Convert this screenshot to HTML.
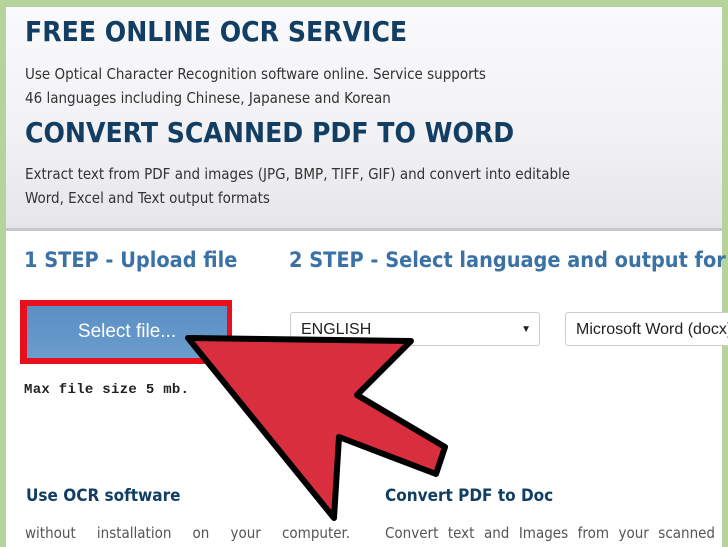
<!DOCTYPE html>
<html><head><style>
body{margin:0;width:728px;height:546px;overflow:hidden;background:#b5d39a;font-family:"DejaVu Sans Condensed","Liberation Sans",sans-serif;}
.page{position:absolute;left:6px;top:7px;width:716px;height:540px;background:#fff;}
.top{position:absolute;left:0;top:0;width:716px;height:221px;background:linear-gradient(#fafafc,#f1f1f4 60%,#e6e6ea);border-bottom:3px solid #c8c8cc;}
h1{position:absolute;margin:0;left:19px;font-size:28px;font-weight:bold;color:#123e63;font-family:"DejaVu Sans Condensed","Liberation Sans",sans-serif;white-space:nowrap}
.p{position:absolute;left:19px;font-size:15px;color:#333;line-height:24px;white-space:nowrap}
h2{position:absolute;margin:0;font-size:21.5px;font-weight:bold;color:#3b72a6;font-family:"DejaVu Sans Condensed","Liberation Sans",sans-serif;white-space:nowrap}
.sel{position:absolute;top:305px;height:34px;border:1px solid #ccc;border-radius:3px;background:#fff;font:16px "Liberation Sans",sans-serif;color:#222;line-height:34px;padding-left:10px;box-sizing:border-box;white-space:nowrap;overflow:hidden}
h3{position:absolute;margin:0;font-size:17px;font-weight:bold;color:#123e63;font-family:"DejaVu Sans Condensed","Liberation Sans",sans-serif;}
</style></head><body>
<div class="page">
<div class="top">
<h1 style="top:8px">FREE ONLINE OCR SERVICE</h1>
<div class="p" style="top:55px">Use Optical Character Recognition software online. Service supports<br>46 languages including Chinese, Japanese and Korean</div>
<h1 style="top:109px">CONVERT SCANNED PDF TO WORD</h1>
<div class="p" style="top:155px">Extract text from PDF and images (JPG, BMP, TIFF, GIF) and convert into editable<br>Word, Excel and Text output formats</div>
</div>
<h2 style="left:18px;top:241px">1 STEP - Upload file</h2>
<h2 style="left:283px;top:241px">2 STEP - Select language and output for</h2>
<div style="position:absolute;left:14px;top:293px;width:212px;height:64px;background:#e8101c"></div>
<div style="position:absolute;left:21px;top:299px;width:200px;height:52px;background:linear-gradient(#5b8fc4,#6a9ccc);color:#fff;font:19px 'Liberation Sans',sans-serif;line-height:52px;text-align:center">Select file...</div>
<div class="sel" style="left:284px;width:250px">ENGLISH<span style="position:absolute;right:8px;font-size:10px">▼</span></div>
<div class="sel" style="left:559px;width:170px">Microsoft Word (docx)</div>
<div style="position:absolute;left:18px;top:375px;font:bold 14px 'Liberation Mono',monospace;color:#222;letter-spacing:0.3px">Max file size 5 mb.</div>
<h3 style="left:20px;top:479px">Use OCR software</h3>
<h3 style="left:379px;top:479px">Convert PDF to Doc</h3>
<div class="p" style="left:19px;top:514px;width:325px;text-align:justify;text-align-last:justify;color:#555;white-space:normal">without installation on your computer.</div>
<div class="p" style="left:379px;top:514px;width:330px;text-align:justify;text-align-last:justify;color:#555;white-space:normal">Convert text and Images from your scanned</div>
</div>
<svg width="728" height="546" style="position:absolute;left:0;top:0">
<polygon points="188,338 411,341 357,395 445,447 436,474 339,437 334,518" fill="#d92e3d" stroke="#000" stroke-width="6" stroke-linejoin="round"/>
</svg>
</body></html>
